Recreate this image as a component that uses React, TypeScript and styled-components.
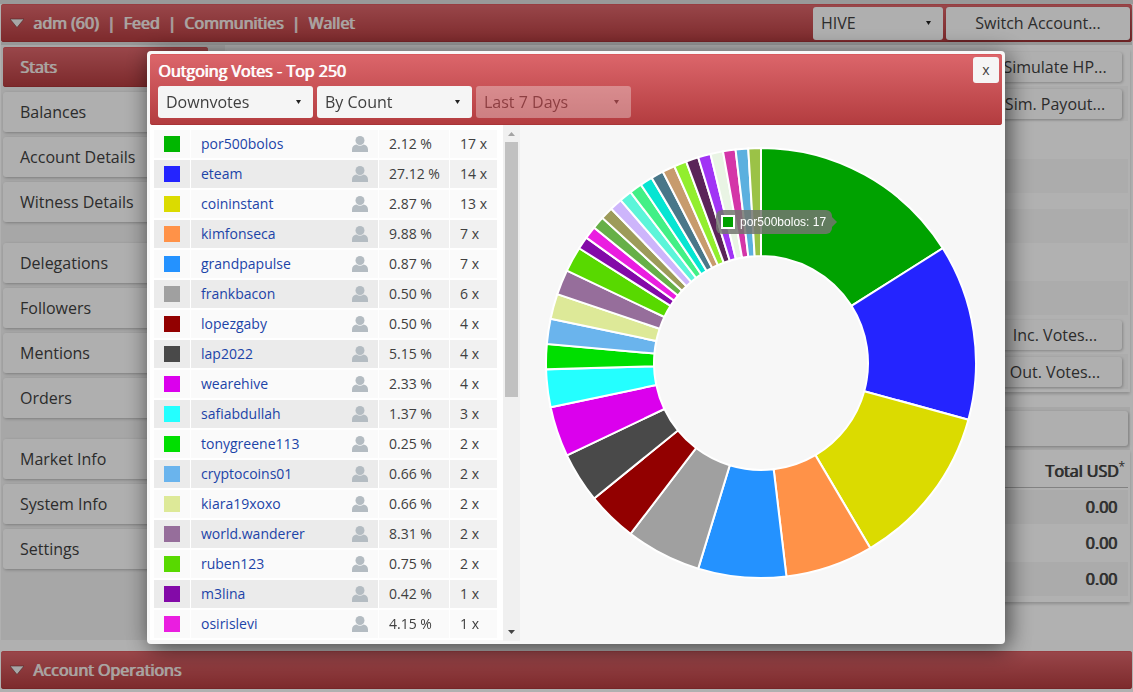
import React from "react";
import styled, { createGlobalStyle, css } from "styled-components";

const GlobalStyle = createGlobalStyle`
  * { box-sizing: border-box; }
  body {
    margin: 0;
    background: #fdfdfd;
    color: #404040;
    font: 16px/22px "Open Sans", "Noto Sans", sans-serif;
  }
  button, select { font: inherit; color: inherit; }
  a { color: inherit; text-decoration: none; }
`;

const redGradient = css`
  background: linear-gradient(#dc666b, #b33c3f);
  box-shadow: inset 0 1px 0 #d9595d, inset 0 -1px 0 #a93538;
`;

const raised = css`
  background: #fbfbfb;
  border: 0;
  border-radius: 3px;
  box-shadow: 1px 1px 3px rgba(0, 0, 0, 0.25);
`;

const heavy = css`
  font-weight: 400;
  text-shadow: 1px 0 0 currentColor;
`;

const Page = styled.div`
  min-height: 100vh;
  border-top: 4px solid #dcdcdc;
  padding: 0 1px 3px;
  display: flex;
  flex-direction: column;
`;

const Bar = styled.header`
  ${redGradient}
  ${heavy}
  height: 38px;
  flex: none;
  border-radius: 3px;
  padding: 0 2px 0 9px;
  display: flex;
  align-items: center;
  gap: 3px;
  color: #f4eeea;
`;

const BarArrow = styled.svg`
  width: 14px;
  height: 10px;
  margin-right: 6px;
  flex: none;
`;

const Nav = styled.nav`
  flex: 1;
  display: flex;
  gap: 8px;
`;

const SelectWrap = styled.div<{ $width: number }>`
  position: relative;
  width: ${(p) => p.$width}px;
  text-shadow: none;
`;

const SelectBox = styled.select<{ $tall?: boolean }>`
  appearance: none;
  width: 100%;
  height: ${(p) => (p.$tall ? 33 : 32)}px;
  display: block;
  padding: 0 8px;
  border: 0;
  border-radius: 3px;
  background: ${(p) => (p.$tall ? "#fbfbfb" : "#f5f5f5")};
  color: #404040;
  opacity: 1;
  &:disabled {
    background: rgba(245, 245, 245, 0.35);
    color: #8d3f42;
  }
`;

const SelectArrow = styled.svg`
  position: absolute;
  right: 12px;
  top: 14px;
  width: 5px;
  height: 4px;
  pointer-events: none;
`;

const SwitchButton = styled.button`
  ${raised}
  width: 184px;
  height: 33px;
  color: #404040;
`;

const Main = styled.main`
  flex: 1;
  border-top: 3px solid #d8d8d8;
  margin-bottom: 11px;
  display: flex;
  background: #fefefe;
`;

const Sidebar = styled.aside`
  width: 224px;
  padding: 2px 17px 0 2px;
  background: #efefef;
  display: flex;
  flex-direction: column;
  gap: 21px;
`;

const MenuGroup = styled.div`
  display: flex;
  flex-direction: column;
  gap: 5px;
`;

const MenuItem = styled.button<{ $active?: boolean }>`
  ${raised}
  height: 40px;
  padding: 0 17px;
  text-align: left;
  ${(p) =>
    p.$active &&
    css`
      ${redGradient}
      ${heavy}
      color: #f4eeea;
    `}
`;

const Content = styled.section`
  flex: 1;
  padding: 4px 2px 0 2px;
`;

const Stats = styled.div`
  padding: 0 2px 3px 0;
  display: flex;
  flex-direction: column;
  gap: 2px;
  box-shadow: 0 2px 3px rgba(0, 0, 0, 0.2);
`;

const StatRow = styled.div<{ $shade?: boolean; $short?: boolean; $button?: boolean }>`
  height: ${(p) => (p.$short ? 12 : p.$button ? 35 : 34)}px;
  padding: 3px 6px 2px 0;
  display: flex;
  justify-content: flex-end;
  background: ${(p) => (p.$shade ? "#f7f7f7" : "#fefefe")};
`;

const StatButton = styled.button`
  ${raised}
  width: 134px;
  height: 30px;
`;

const Toolbar = styled.div`
  margin-top: 15px;
  padding: 4px 2px 4px 4px;
  background: #f0f0f0;
`;

const ToolbarInner = styled.div`
  ${raised}
  height: 35px;
`;

const Totals = styled.div`
  padding: 2px 2px 4px;
  box-shadow: 0 2px 3px rgba(0, 0, 0, 0.2);
`;

const TotalsTable = styled.table`
  width: 100%;
  border-spacing: 0 2px;
  th, td {
    ${heavy}
    height: 34px;
    padding: 0 11px 0 0;
    text-align: right;
  }
  th {
    padding-right: 3px;
    border-bottom: 1px solid #bbb;
  }
  tbody tr:nth-child(odd) { background: #f5f5f5; }
  sup {
    font-size: 12px;
    line-height: 12px;
    text-shadow: none;
  }
`;

const Overlay = styled.div`
  position: fixed;
  inset: 0;
  padding: 51px 128px 48px 147px;
  display: flex;
  background: rgba(0, 0, 0, 0.3);
`;

const Dialog = styled.div`
  flex: 1;
  min-width: 0;
  padding: 3px;
  display: flex;
  flex-direction: column;
  background: #f7f7f7;
  border-radius: 4px;
  box-shadow: 3px 4px 25px rgba(0, 0, 0, 0.65);
`;

const DialogHeader = styled.div`
  ${redGradient}
  height: 71px;
  flex: none;
  padding: 3px 3px 7px 8px;
  border-radius: 3px;
  display: flex;
  justify-content: space-between;
  align-items: flex-start;
`;

const Title = styled.h2`
  ${heavy}
  margin: 3px 0 4px;
  color: #fff;
  font-size: 16px;
  line-height: 22px;
`;

const Filters = styled.div`
  display: flex;
  gap: 4px;
`;

const CloseButton = styled.button`
  width: 26px;
  height: 26px;
  padding: 0;
  border: 0;
  border-radius: 3px;
  background: #f5f5f5;
  font-size: 14px;
`;

const DialogBody = styled.div`
  flex: 1;
  min-height: 0;
  display: flex;
`;

const VoteList = styled.div`
  width: 370px;
  flex: none;
  display: flex;
  overflow: hidden;
`;

const VoteTable = styled.table`
  flex: 1;
  table-layout: fixed;
  border-spacing: 1px 2px;
  padding: 3px 5px 0 3px;
  background: #fff;
  font-size: 14px;
  line-height: 20px;
  white-space: nowrap;
  align-self: flex-start;
  td {
    height: 28px;
    padding: 0 0 0 10px;
    background: #fafafa;
  }
  tr:nth-child(even) td { background: #ebebeb; }
  tr:nth-child(even) td:nth-child(n + 3) { background: #f1f1f1; }
`;

const SwatchCell = styled.td`
  width: 36px;
`;

const NameCell = styled.td`
  width: 187px;
  a { color: #1c44a8; }
`;

const NameLine = styled.div`
  padding-right: 10px;
  display: flex;
  justify-content: space-between;
  align-items: center;
`;

const PercentCell = styled.td`
  width: 70px;
`;

const Swatch = styled.span`
  display: block;
  width: 16px;
  height: 16px;
`;

const Person = styled.svg`
  width: 16px;
  height: 16px;
  display: block;
`;

const ScrollTrack = styled.div`
  width: 17px;
  padding: 0 2px;
  background: #f0f0f0;
  display: flex;
  flex-direction: column;
  align-items: center;
`;

const ScrollArrow = styled.svg`
  width: 7px;
  height: 17px;
  flex: none;
`;

const ScrollThumb = styled.div`
  width: 13px;
  flex: 1;
  background: linear-gradient(#c1c1c1, #c1c1c1) 0 0 / 100% 53% no-repeat;
`;

const ChartPane = styled.div`
  flex: 1;
  padding-top: 23px;
  display: flex;
  justify-content: center;
  align-items: flex-start;
`;

const ChartBox = styled.div`
  position: relative;
  width: 430px;
  svg { display: block; width: 100%; overflow: visible; }
`;

const Tooltip = styled.div`
  position: absolute;
  left: 170px;
  top: 62px;
  height: 24px;
  padding: 0 6px 0 5px;
  display: flex;
  align-items: center;
  gap: 5px;
  border-radius: 6px;
  background: rgba(115, 118, 112, 0.85);
  color: #fff;
  font: 12px/14px "Liberation Sans", sans-serif;
  white-space: nowrap;
  &::after {
    content: "";
    position: absolute;
    left: 100%;
    top: 7px;
    border: 5px solid transparent;
    border-right: 0;
    border-left-color: rgba(115, 118, 112, 0.85);
  }
`;

const TooltipKey = styled.span`
  width: 14px;
  height: 14px;
  border: 2px solid #fff;
  background: #00a200;
`;

type Vote = { name: string; percent: string; count: number; color: string };

const votes: Vote[] = [
  { name: "por500bolos", percent: "2.12", count: 17, color: "#00b600" },
  { name: "eteam", percent: "27.12", count: 14, color: "#2424ff" },
  { name: "coininstant", percent: "2.87", count: 13, color: "#dbdb00" },
  { name: "kimfonseca", percent: "9.88", count: 7, color: "#ff9248" },
  { name: "grandpapulse", percent: "0.87", count: 7, color: "#2492ff" },
  { name: "frankbacon", percent: "0.50", count: 6, color: "#a0a0a0" },
  { name: "lopezgaby", percent: "0.50", count: 4, color: "#920000" },
  { name: "lap2022", percent: "5.15", count: 4, color: "#494949" },
  { name: "wearehive", percent: "2.33", count: 4, color: "#db00ed" },
  { name: "safiabdullah", percent: "1.37", count: 3, color: "#24ffff" },
  { name: "tonygreene113", percent: "0.25", count: 2, color: "#00df00" },
  { name: "cryptocoins01", percent: "0.66", count: 2, color: "#6ab4ed" },
  { name: "kiara19xoxo", percent: "0.66", count: 2, color: "#dde998" },
  { name: "world.wanderer", percent: "8.31", count: 2, color: "#966e9b" },
  { name: "ruben123", percent: "0.75", count: 2, color: "#58d900" },
  { name: "m3lina", percent: "0.42", count: 1, color: "#830aa8" },
  { name: "osirislevi", percent: "4.15", count: 1, color: "#ea1ee0" },
];

const otherColors = [
  "#66b048", "#9d9b5a", "#cdb5fb", "#5cf5d9", "#42f086", "#06e5d2", "#497789",
  "#c79b6d", "#92ee2e", "#5b2459", "#a134f5", "#e9f4e4", "#d436a8", "#5bb0df", "#9bc247",
];

const slices = [
  ...votes.map((v, i) => ({ count: v.count, color: i === 0 ? "#00a200" : v.color })),
  ...otherColors.map((color) => ({ count: 1, color })),
];

const OUTER = 215;
const INNER = 107;

function Doughnut() {
  const total = slices.reduce((sum, s) => sum + s.count, 0);
  const point = (r: number, a: number) =>
    `${(215 + r * Math.sin(a)).toFixed(2)} ${(215 - r * Math.cos(a)).toFixed(2)}`;
  let start = 0;
  return (
    <svg viewBox="0 0 430 430" role="img" aria-label="Outgoing votes by count">
      {slices.map((s, i) => {
        const a = start;
        const b = a + (s.count / total) * Math.PI * 2;
        start = b;
        return (
          <path
            key={i}
            d={`M${point(OUTER, a)}A${OUTER} ${OUTER} 0 0 1 ${point(OUTER, b)}L${point(INNER, b)}A${INNER} ${INNER} 0 0 0 ${point(INNER, a)}Z`}
            fill={s.color}
            stroke="#fff"
            strokeWidth="2"
          />
        );
      })}
    </svg>
  );
}

function Dropdown(props: { label: string; value: string; width: number; tall?: boolean; disabled?: boolean }) {
  return (
    <SelectWrap $width={props.width}>
      <SelectBox aria-label={props.label} $tall={props.tall} disabled={props.disabled}>
        <option>{props.value}</option>
      </SelectBox>
      <SelectArrow viewBox="0 0 5 4">
        <path d="M0 0h5L2.500 4z" fill={props.disabled ? "#8d3f42" : "#222"} />
      </SelectArrow>
    </SelectWrap>
  );
}

function Collapse() {
  return (
    <BarArrow viewBox="0 0 14 10">
      <path d="M0 1h14L7 9.500z" fill="#efefef" stroke="#6f3a3a" strokeWidth="0.600" />
    </BarArrow>
  );
}

const menu = [
  ["Stats", "Balances", "Account Details", "Witness Details"],
  ["Delegations", "Followers", "Mentions", "Orders"],
  ["Market Info", "System Info", "Settings"],
];

const statRows: { label?: string; shade?: boolean; short?: boolean }[] = [
  { label: "Simulate HP..." },
  { label: "Sim. Payout...", shade: true },
  {},
  { shade: true },
  { short: true },
  { shade: true },
  {},
  { shade: true },
  { label: "Inc. Votes..." },
  { label: "Out. Votes...", shade: true },
];

export default function App() {
  return (
    <>
      <GlobalStyle />
      <Page>
        <Bar>
          <Collapse />
          <Nav>
            <a href="#account">adm (60)</a>
            <span>|</span>
            <a href="#feed">Feed</a>
            <span>|</span>
            <a href="#communities">Communities</a>
            <span>|</span>
            <a href="#wallet">Wallet</a>
          </Nav>
          <Dropdown label="Chain" value="HIVE" width={130} tall />
          <SwitchButton>Switch Account...</SwitchButton>
        </Bar>
        <Main>
          <Sidebar>
            {menu.map((group) => (
              <MenuGroup key={group[0]}>
                {group.map((item) => (
                  <MenuItem key={item} $active={item === "Stats"}>{item}</MenuItem>
                ))}
              </MenuGroup>
            ))}
          </Sidebar>
          <Content>
            <Stats>
              {statRows.map((row, i) => (
                <StatRow key={i} $shade={row.shade} $short={row.short} $button={!!row.label}>
                  {row.label && <StatButton>{row.label}</StatButton>}
                </StatRow>
              ))}
            </Stats>
            <Toolbar>
              <ToolbarInner />
            </Toolbar>
            <Totals>
              <TotalsTable>
                <thead>
                  <tr><th>Total USD<sup>*</sup></th></tr>
                </thead>
                <tbody>
                  <tr><td>0.00</td></tr>
                  <tr><td>0.00</td></tr>
                  <tr><td>0.00</td></tr>
                </tbody>
              </TotalsTable>
            </Totals>
          </Content>
        </Main>
        <Bar as="footer">
          <Collapse />
          <span>Account Operations</span>
        </Bar>
      </Page>
      <Overlay>
        <Dialog role="dialog" aria-labelledby="votes-title">
          <DialogHeader>
            <div>
              <Title id="votes-title">Outgoing Votes - Top 250</Title>
              <Filters>
                <Dropdown label="Vote type" value="Downvotes" width={155} />
                <Dropdown label="Order" value="By Count" width={155} />
                <Dropdown label="Period" value="Last 7 Days" width={155} disabled />
              </Filters>
            </div>
            <CloseButton aria-label="Close">x</CloseButton>
          </DialogHeader>
          <DialogBody>
            <VoteList>
              <VoteTable>
                <tbody>
                  {votes.map((v) => (
                    <tr key={v.name}>
                      <SwatchCell><Swatch style={{ background: v.color }} /></SwatchCell>
                      <NameCell>
                        <NameLine>
                          <a href={`#${v.name}`}>{v.name}</a>
                          <Person viewBox="0 0 16 16" fill="#b4bcc2">
                            <circle cx="8" cy="4.500" r="4.500" />
                            <path d="M0 16v-2.500C0 10.500 2 9 4.500 8.500c2 1.600 5 1.600 7 0C14 9 16 10.500 16 13.500V16z" />
                          </Person>
                        </NameLine>
                      </NameCell>
                      <PercentCell>{v.percent} %</PercentCell>
                      <td>{v.count} x</td>
                    </tr>
                  ))}
                </tbody>
              </VoteTable>
              <ScrollTrack>
                <ScrollArrow viewBox="0 0 7 17"><path d="M0 11l3.500-4L7 11z" fill="#a3a3a3" /></ScrollArrow>
                <ScrollThumb />
                <ScrollArrow viewBox="0 0 7 17"><path d="M0 6l3.500 4L7 6z" fill="#444" /></ScrollArrow>
              </ScrollTrack>
            </VoteList>
            <ChartPane>
              <ChartBox>
                <Doughnut />
                <Tooltip>
                  <TooltipKey />
                  por500bolos: 17
                </Tooltip>
              </ChartBox>
            </ChartPane>
          </DialogBody>
        </Dialog>
      </Overlay>
    </>
  );
}
